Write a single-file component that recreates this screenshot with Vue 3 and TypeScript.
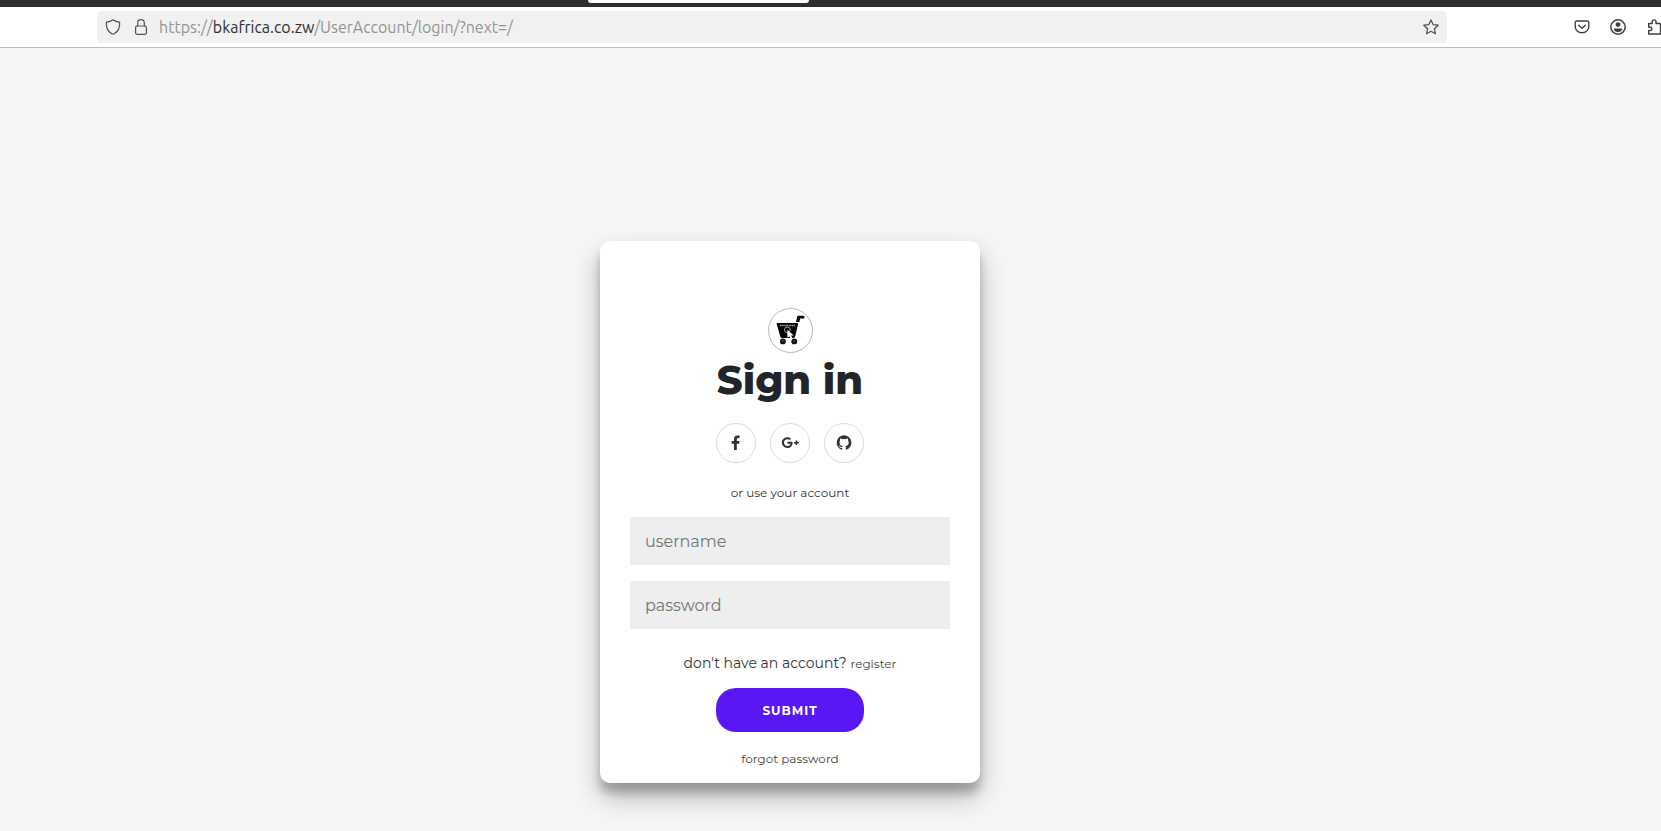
<script setup lang="ts">
import { ref } from 'vue'

const username = ref('')
const password = ref('')
const address = { scheme: 'https://', host: 'bkafrica.co.zw', path: '/UserAccount/login/?next=/' }
</script>

<template>
  <div class="window">
    <header class="chrome">
      <div class="tab-strip"><div class="active-tab"></div></div>
      <div class="toolbar">
        <div class="address-bar">
          <div class="site-tools">
            <button class="tool" type="button" aria-label="Tracking protection">
              <svg viewBox="0 0 16 16" class="line"><path d="M8 .8c1.7 1.3 4.1 2.1 6.6 2.4.4 4.9-1.4 9.3-5.4 11.5-.8.5-1.6.5-2.4 0C2.800 12.500 1 8.100 1.400 3.200 3.900 2.900 6.300 2.100 8 .8z" /></svg>
            </button>
            <button class="tool" type="button" aria-label="Connection secure">
              <svg viewBox="0 0 16 16" class="line"><rect x="2.600" y="7" width="10.800" height="8.300" rx="1.500" /><path d="M4.700 7V4a3.300 3.300 0 0 1 6.600 0v3" /></svg>
            </button>
          </div>
          <div class="address"><span>{{ address.scheme }}</span><strong>{{ address.host }}</strong><span>{{ address.path }}</span></div>
          <button class="tool" type="button" aria-label="Bookmark this page">
            <svg viewBox="0 0 16 16" class="line"><path d="M8 .9l2.100 4.700 5.100.6-3.800 3.500 1 5.100L8 12.300l-4.400 2.500 1-5.100L.8 6.200l5.100-.6z" /></svg>
          </button>
        </div>
        <div class="actions">
          <button class="tool" type="button" aria-label="Save to Pocket">
            <svg viewBox="0 0 16 16" class="line bold"><path d="M2.500 2h11a1.300 1.300 0 0 1 1.300 1.300v4.200a6.800 6.300 0 0 1-13.600 0V3.300A1.300 1.300 0 0 1 2.500 2z" /><path d="M4.700 6.200L8 9.300l3.300-3.100" /></svg>
          </button>
          <button class="tool" type="button" aria-label="Account">
            <svg viewBox="0 0 16 16"><circle cx="8" cy="8" r="7.200" fill="none" stroke="#3f3f3f" stroke-width="1.500" /><circle cx="8" cy="5.600" r="2.400" fill="#3f3f3f" /><path d="M3.800 9.500h8.400v1.300A4.600 4.600 0 0 1 8 13a4.600 4.600 0 0 1-4.200-2.200z" fill="#3f3f3f" /></svg>
          </button>
          <button class="tool" type="button" aria-label="Extensions">
            <svg viewBox="0 0 16 16" class="line bold"><path d="M2.700 4.500h3.500V2.800a1.900 1.900 0 0 1 3.800 0v1.700h3.500a1 1 0 0 1 1 1V15H2.700v-3.500h1.600a1.600 1.600 0 0 0 0-3.200H2.700z" /></svg>
          </button>
        </div>
      </div>
    </header>

    <main class="page">
      <form class="card" @submit.prevent>
        <svg class="logo" viewBox="0 0 45 45" role="img" aria-label="Shopping cart">
          <circle cx="22.500" cy="22.500" r="22" fill="#fff" stroke="#b8b8b8" />
          <path d="M9.500 14.900h20q.8 0 .6 1L27.300 28q-.4 1.900-2.200 1.900H14.300q-1.800 0-2.200-1.900L8.700 16q-.2-1.100.8-1.100z" fill="#050505" />
          <path d="M28 13.900l1-4.700q.3-1.400 1.600-1.400h5q.8 0 .8.800v1.100q0 .8-.8.800h-3.400l-.8 3.400z" fill="#050505" />
          <path d="M12 17.500h15.500" stroke="#aaa" stroke-width="1.300" stroke-dasharray="1.200 .5" />
          <circle cx="19.400" cy="21.900" r="2.900" fill="none" stroke="#ccc" stroke-width=".8" />
          <path d="M19.400 21.800v8l2-1.600 1.300 2.800 1.700-.8-1.300-2.700h2.700z" fill="#fff" />
          <circle cx="14.900" cy="33.400" r="2.900" fill="#111" /><circle cx="26.300" cy="33.400" r="2.900" fill="#111" />
          <path d="M14 33h1.500M25.500 33H27" stroke="#999" stroke-width=".8" />
        </svg>
        <h1>Sign in</h1>
        <div class="social">
          <a href="#" aria-label="Facebook"><svg viewBox="0 0 16 16"><path d="M6 15V8.700H3.600V6H6V4C6 1.700 7.300.4 9.500.4c1 0 2.100.2 2.100.2v2.300h-1.200c-1.200 0-1.600.7-1.600 1.500V6h2.700l-.4 2.700H8.800V15z" /></svg></a>
          <a href="#" aria-label="Google Plus"><svg class="wide" viewBox="0 14 640 512"><path d="M386 228c2 10 3 20 3 34 0 105-70 179-176 179C111 441 29 359 29 257S111 73 213 73c50 0 91 18 123 48l-50 48c-14-13-38-28-73-28-63 0-114 52-114 116s51 116 114 116c73 0 100-52 104-79H213v-66h173zm159 7v-53h-53v53h-53v53h53v53h53v-53h53v-53h-53z" /></svg></a>
          <a href="#" aria-label="GitHub"><svg viewBox="0 0 16 16"><path fill-rule="evenodd" d="M8 .3A7.400 7.400 0 0 0 5.700 14.700c.4.100.5-.2.500-.4v-1.400c-2 .4-2.500-.9-2.500-.9-.3-.8-.8-1-.8-1-.7-.5.1-.5.1-.5.7.1 1.100.8 1.100.8.700 1.100 1.700.8 2.200.6 0-.5.300-.8.500-1-1.600-.2-3.300-.8-3.300-3.500 0-.8.300-1.400.7-1.900 0-.2-.3-.9.100-1.900 0 0 .6-.2 2 .7a7 7 0 0 1 3.600 0c1.400-.9 2-.7 2-.7.400 1 .1 1.700.1 1.900.5.500.7 1.100.7 1.900 0 2.700-1.700 3.300-3.300 3.500.3.200.5.700.5 1.300v2.100c0 .2.100.5.500.4A7.400 7.400 0 0 0 8 .3z" /></svg></a>
        </div>
        <p class="hint">or use your account</p>
        <input v-model="username" type="text" placeholder="username" aria-label="username" autocomplete="username" />
        <input v-model="password" type="password" placeholder="password" aria-label="password" autocomplete="current-password" />
        <p class="signup">don't have an account? <a href="#">register</a></p>
        <button class="submit" type="submit">Submit</button>
        <a class="forgot" href="#">forgot password</a>
      </form>
    </main>
  </div>
</template>

<style>
body { margin: 0; background: #f6f6f9; }
</style>

<style scoped>
* { box-sizing: border-box; }
.window { display: flex; flex-direction: column; min-height: 100vh; background: #f6f6f9; overflow: hidden; color: #333; font-family: Montserrat, Inter, "Liberation Sans", sans-serif; }
.chrome { background: #fff; border-bottom: 1px solid #bdbdbd; }
.tab-strip { height: 7px; padding-left: 588px; background: #302e2e; }
.active-tab { width: 221px; height: 3px; background: #fff; border-radius: 0 0 3px 3px; }
.toolbar { display: flex; padding: 4px 0; padding-left: 97px; }
.address-bar { flex: 1; min-width: 0; display: flex; align-items: center; gap: 10px; height: 32px; padding: 0 8px; background: #f1f1f1; border-radius: 4px; }
.site-tools { display: flex; gap: 12px; }
.address { flex: 1; min-width: 0; overflow: hidden; white-space: nowrap; color: #949494; font: 16px/24px Ubuntu, "Noto Sans", sans-serif; }
.address strong { color: #303030; font-weight: 400; }
.actions { width: 214px; flex: none; display: flex; align-items: center; gap: 20px; padding-left: 127px; }
.tool { display: block; flex: none; width: 16px; height: 16px; padding: 0; border: 0; background: none; }
.tool svg { display: block; width: 16px; height: 16px; overflow: visible; }
.line { fill: none; stroke: #505050; stroke-width: 1.2; stroke-linejoin: round; stroke-linecap: round; }
.bold { stroke: #3f3f3f; stroke-width: 1.4; }
.page { flex: 1; display: flex; justify-content: center; align-items: flex-start; padding: 193px 81px 48px 0; }
.card { width: 380px; display: flex; flex-direction: column; align-items: center; padding: 67px 30px 12px; background: #fff; border-radius: 10px; box-shadow: 0 14px 28px rgba(0, 0, 0, .25), 0 10px 10px rgba(0, 0, 0, .22); }
.logo { display: block; width: 45px; height: 45px; }
h1 { margin: 3px 0 19px; color: #212529; font-size: 40px; line-height: 48px; font-weight: 800; }
.social { display: flex; gap: 14px; }
.social a { display: flex; align-items: center; justify-content: center; width: 40px; height: 40px; border: 1px solid #ddd; border-radius: 50%; }
.social svg { width: 16px; height: 16px; fill: #333; }
.social .wide { width: 19px; }
.hint { margin: 20px 0 14px; font-size: 12px; line-height: 20px; }
input { width: 100%; height: 48px; margin: 0 0 16px; padding: 0 15px; border: 0; border-radius: 0; background: #eee; color: #333; font: 400 16px/24px Montserrat, Inter, sans-serif; }
input::placeholder { color: #757575; opacity: 1; }
.signup { margin: 6px 0 12px; font-size: 14px; line-height: 24px; }
.signup a, .forgot { color: #444; font-size: 12px; text-decoration: none; }
.submit { width: 148px; height: 44px; padding: 1px 0 0; border: 0; border-radius: 20px; background: #5a17f5; color: #fff; font: 700 12px/18px Montserrat, Inter, sans-serif; letter-spacing: 1px; text-transform: uppercase; }
.forgot { margin-top: 15px; line-height: 24px; }
</style>
